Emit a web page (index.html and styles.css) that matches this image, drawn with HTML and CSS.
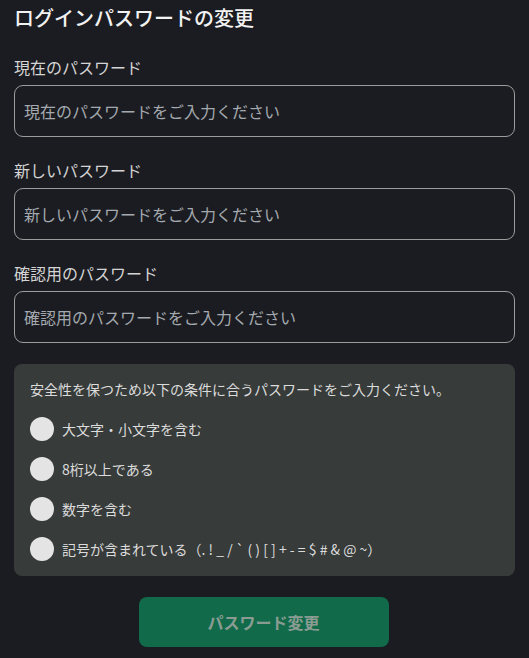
FILE: index.html
```html
<!DOCTYPE html>
<html lang="ja">
<head>
    <meta charset="UTF-8">
    <title>ログインパスワードの変更</title>
    <link rel="stylesheet" href="styles.css">
</head>
<body>
    <div class="page">
        <h1 class="title">ログインパスワードの変更</h1>
        <div class="field">
            <label class="label">現在のパスワード</label>
            <input class="input" type="password" placeholder="現在のパスワードをご入力ください">
        </div>
        <div class="field">
            <label class="label">新しいパスワード</label>
            <input class="input" type="password" placeholder="新しいパスワードをご入力ください">
        </div>
        <div class="field">
            <label class="label">確認用のパスワード</label>
            <input class="input" type="password" placeholder="確認用のパスワードをご入力ください">
        </div>
        <div class="rules">
            <p class="rules-head">安全性を保つため以下の条件に合うパスワードをご入力ください。</p>
            <ul class="rule-list">
                <li><span class="dot"></span>大文字・小文字を含む</li>
                <li><span class="dot"></span>8桁以上である</li>
                <li><span class="dot"></span>数字を含む</li>
                <li><span class="dot"></span>記号が含まれている（. ! _ / ` ( ) [ ] + - = $ # &amp; @ ~）</li>
            </ul>
        </div>
        <div class="actions">
            <button class="submit" disabled>パスワード変更</button>
        </div>
    </div>
</body>
</html>
```

FILE: styles.css
```css
*{
    padding: 0;
    margin: 0;
    box-sizing: border-box;
}
body{
    background: #1b1c21;
    font-family: "Noto Sans CJK JP", "Noto Sans", sans-serif;
    color: #d6d6d6;
}
li{
    list-style: none;
}
.page{
    padding: 4px 14px 0;
}
.title{
    font-size: 20px;
    font-weight: 500;
    line-height: 28px;
    color: #f2f2f2;
    margin-bottom: 23px;
}
.field{
    display: flex;
    flex-direction: column;
    margin-bottom: 21px;
}
.label{
    font-size: 16px;
    line-height: 24px;
    margin-bottom: 6px;
    color: #d4d4d4;
}
.input{
    height: 52px;
    padding: 0 9px;
    border: 1px solid #9c9c9c;
    border-radius: 9px;
    background: transparent;
    font-family: inherit;
    font-size: 16px;
    color: #e0e0e0;
    outline: none;
}
.input::placeholder{
    color: #a3a9ae;
}
.rules{
    background: #373b3a;
    border-radius: 8px;
    padding: 15px 16px 15px;
}
.rules-head{
    font-size: 14px;
    line-height: 20px;
    color: #dcdcdc;
}
.rule-list{
    margin-top: 18px;
    display: flex;
    flex-direction: column;
    gap: 16px;
}
.rule-list li{
    display: flex;
    align-items: center;
    gap: 8px;
    font-size: 14px;
    line-height: 24px;
    color: #dcdcdc;
}
.dot{
    width: 24px;
    height: 24px;
    border-radius: 50%;
    background: #e4e4e4;
    flex-shrink: 0;
}
.actions{
    display: flex;
    justify-content: center;
    padding: 21px 0 20px;
}
.submit{
    width: 250px;
    height: 50px;
    margin-right: 2px;
    border: none;
    border-radius: 8px;
    background: #116b4a;
    color: #8a9c92;
    font-family: inherit;
    font-size: 16px;
    font-weight: 700;
}
```
